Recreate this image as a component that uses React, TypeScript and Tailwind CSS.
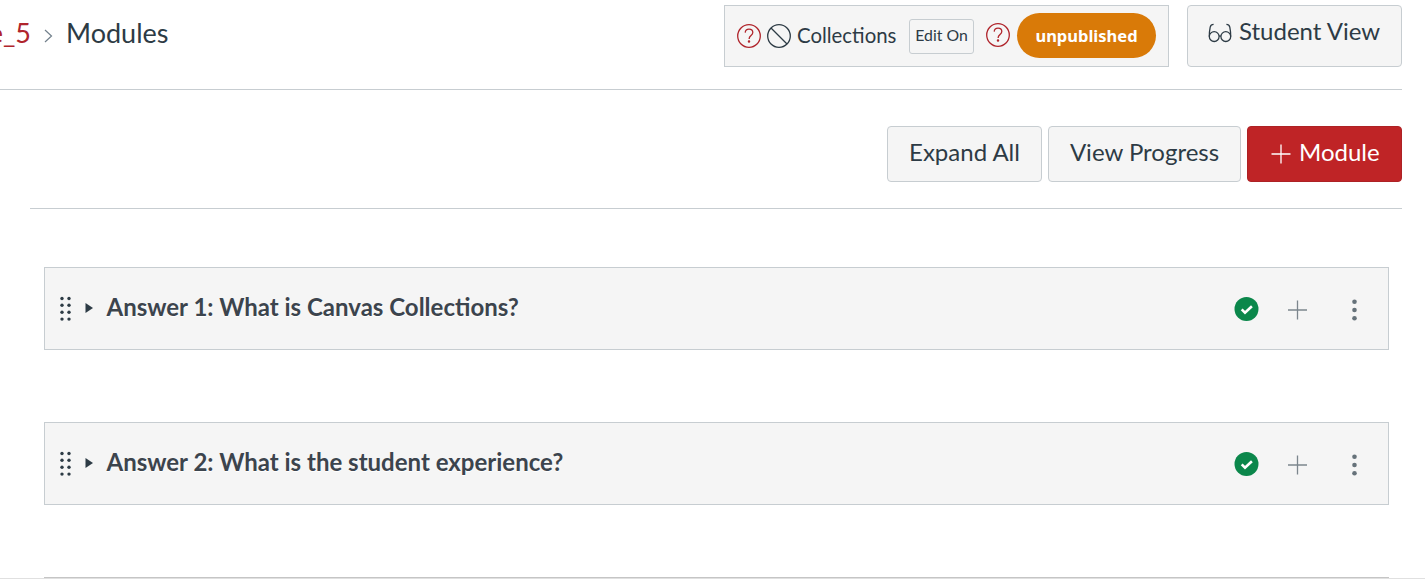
import React from "react";

function Help() {
  return (
    <svg className="block h-6 w-6 shrink-0" viewBox="0 0 24 24" fill="none" stroke="#b0252c" strokeWidth="1.3">
      <circle cx="12" cy="12" r="11.3" />
      <path d="M8.2 8.6C8.4 6.4 9.9 5.2 12 5.2c2.2 0 3.8 1.3 3.8 3.4 0 3-3.7 3-3.7 6.3" />
      <circle cx="12" cy="17.4" r="0.6" fill="#b0252c" />
    </svg>
  );
}

function Plus({ color, className }: { color: string; className: string }) {
  return (
    <svg className={className} viewBox="0 0 20 20" fill="none" stroke={color} strokeWidth="1.3">
      <path d="M10 0.5v19M0.5 10h19" />
    </svg>
  );
}

function ModuleRow({ title }: { title: string }) {
  return (
    <section className="flex h-[83px] shrink-0 items-center border border-[#c7cdd1] bg-[#f5f5f5] pr-[30px] pl-[15px]">
      <svg className="h-[26px] w-[12px] shrink-0" viewBox="0 0 12 26" fill="#2d3b45">
        {[2.5, 9.3, 16.2, 23.1].map((y) => (
          <g key={y}>
            <circle cx="2" cy={y} r="1.7" />
            <circle cx="9" cy={y} r="1.7" />
          </g>
        ))}
      </svg>
      <svg className="mb-[2px] ml-[13px] h-[10px] w-[8px] shrink-0" viewBox="0 0 8 10" fill="#2d3b45">
        <path d="M0.5 0L8 5L0.5 10z" />
      </svg>
      <h2 className="ml-[13.5px] grow pb-[3px] text-[24px] leading-[30px] font-bold whitespace-nowrap text-[#3c444d] [text-shadow:0_1px_0_#fff]">
        <span>{title}</span>
      </h2>
      <svg className="h-6 w-[25px] shrink-0" viewBox="0 0 25 24">
        <circle cx="12.5" cy="12" r="12" fill="#0b874b" />
        <path d="M7.7 12.4l3.3 3.3 6.9-6.5" fill="none" stroke="#fff" strokeWidth="2.6" />
      </svg>
      <svg className="mt-[3px] ml-[28px] h-5 w-[21px] shrink-0" viewBox="0 0 21 20" fill="none" stroke="#7c868d" strokeWidth="1.3">
        <path d="M10.5 0.5v19M1 10h19" />
      </svg>
      <svg className="mt-[2px] ml-[43px] h-[22px] w-[7px] shrink-0" viewBox="0 0 7 22" fill="#66727a">
        <circle cx="3.5" cy="2.7" r="2.3" />
        <circle cx="3.5" cy="11" r="2.3" />
        <circle cx="3.5" cy="19.3" r="2.3" />
      </svg>
    </section>
  );
}

export default function App() {
  return (
    <div className="h-[579px] overflow-hidden bg-white font-['Lato',sans-serif] text-[#2d3b45]">
      <header className="mr-[23px] flex h-[90px] items-start border-b border-[#c7cdd1]">
        <nav className="flex w-[724px] shrink-0 items-start pt-[16px] text-[27px] leading-[34px]">
          <div className="flex w-[31px] shrink-0 justify-end overflow-hidden text-[#b0252c]">
            <span>e_5</span>
          </div>
          <svg className="mt-[13px] ml-[13px] h-[14px] w-[9px]" viewBox="0 0 9 14" fill="none" stroke="#73818c" strokeWidth="1.2">
            <path d="M1 1l6.5 6L1 13" />
          </svg>
          <span className="ml-[13px]">Modules</span>
        </nav>
        <div className="mt-[5px] flex h-[62px] w-[445px] shrink-0 items-center border border-[#c7cdd1] bg-[#f5f5f5] pl-[12px]">
          <Help />
          <svg className="ml-[6px] block h-6 w-6 shrink-0" viewBox="0 0 24 24" fill="none" stroke="#2d3b45" strokeWidth="1.3">
            <circle cx="12" cy="12" r="11.3" />
            <path d="M4 4l16 16" />
          </svg>
          <span className="mb-[2px] ml-[6px] w-[112px] shrink-0 text-[20.4px] leading-[26px]"><span>Collections</span></span>
          <button className="h-[35px] w-[65px] shrink-0 rounded-[3px] border border-[#c7cdd1] pb-[3px] text-[15.8px] leading-[30px] whitespace-nowrap"><span>Edit On</span></button>
          <div className="mr-[7px] mb-[2px] ml-[12px]"><Help /></div>
          <div className="mb-[2px] flex h-[45px] w-[139px] shrink-0 items-center justify-center rounded-full bg-[#d97a08] pt-[1px] font-['Noto_Sans',sans-serif] text-[16.5px] leading-[24px] font-bold text-white">
            <span>unpublished</span>
          </div>
        </div>
        <button className="mt-[5px] ml-[18px] flex h-[62px] w-[215px] shrink-0 items-center rounded-[4px] border border-[#c7cdd1] bg-[#f5f5f5] pb-[10px] pl-[20px] text-[24px] leading-[30px] whitespace-nowrap">
          <svg className="mt-[3px] mr-[7px] h-[20px] w-[24px] shrink-0" viewBox="0 0 24 20" fill="none" stroke="#2d3b45" strokeWidth="1.3">
            <circle cx="6.2" cy="13.6" r="4.9" />
            <circle cx="17.8" cy="13.6" r="4.9" />
            <path d="M11 13.2q1-.6 2 0M1.3 13.6C1.3 9.5 1.6 7 2.2 4.2Q2.9 1.4 5.6 1.4M22.7 13.6C22.7 9.5 22.4 7 21.8 4.2Q21.1 1.4 18.4 1.4" />
          </svg>
          <span>Student View</span>
        </button>
      </header>
      <main className="mr-[23px] ml-[30px]">
        <div className="flex h-[119px] items-start justify-end gap-[6px] border-b border-[#c7cdd1] pt-[36px] text-[24px] leading-[30px] whitespace-nowrap">
          <button className="h-[56px] w-[155px] rounded-[4px] border border-[#c7cdd1] bg-[#f5f5f5] pb-[4px]"><span>Expand All</span></button>
          <button className="h-[56px] w-[193px] rounded-[4px] border border-[#c7cdd1] bg-[#f5f5f5] pb-[4px]"><span>View Progress</span></button>
          <button className="flex h-[56px] w-[155px] items-center rounded-[4px] border border-[#ad2225] bg-[#bf2426] pb-[4px] pl-[23px] text-white">
            <Plus color="#fff" className="mt-[4px] mr-[8px] h-5 w-5 shrink-0" />
            <span>Module</span>
          </button>
        </div>
        <div className="mr-[13px] ml-[14px] flex flex-col gap-[72px] pt-[58px]">
          <ModuleRow title="Answer 1: What is Canvas Collections?" />
          <ModuleRow title="Answer 2: What is the student experience?" />
          <div className="h-px bg-[#c5c5c5]" />
        </div>
      </main>
      <div className="h-px bg-[#e0e0e0]" />
    </div>
  );
}
